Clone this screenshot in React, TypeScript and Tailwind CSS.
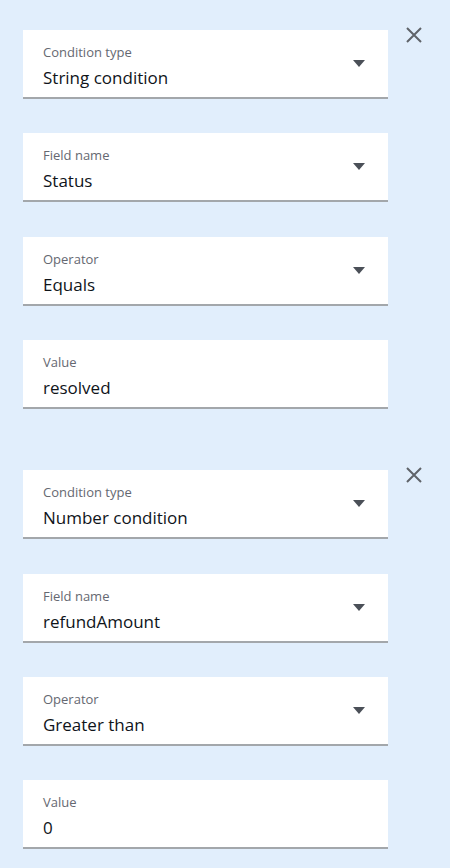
type Field = {
  label: string;
  value: string;
  select?: boolean;
};

const groups: Field[][] = [
  [
    { label: "Condition type", value: "String condition", select: true },
    { label: "Field name", value: "Status", select: true },
    { label: "Operator", value: "Equals", select: true },
    { label: "Value", value: "resolved" },
  ],
  [
    { label: "Condition type", value: "Number condition", select: true },
    { label: "Field name", value: "refundAmount", select: true },
    { label: "Operator", value: "Greater than", select: true },
    { label: "Value", value: "0" },
  ],
];

function FormField({ field }: { field: Field }) {
  return (
    <div className="relative flex h-[69px] w-[365px] flex-col border-b-2 border-[#a3a7ab] bg-white pt-[14px] pl-5">
      <span className="text-[13px] leading-4 text-[#656871]">{field.label}</span>
      <span className="mt-[6px] text-[17px] leading-6 text-[#0f141a]">{field.value}</span>
      {field.select && (
        <svg
          viewBox="0 0 12 7"
          className="absolute top-[30px] right-[23px] h-[7px] w-3"
        >
          <path d="M0 0h12L6 7z" fill="#4b5058" />
        </svg>
      )}
    </div>
  );
}

export default function App() {
  return (
    <div
      className="flex min-h-[868px] w-[450px] flex-col gap-[61px] bg-[#e1eefc] pt-[30px] pl-[23px]"
      style={{ fontFamily: "'Open Sans', Roboto, sans-serif" }}
    >
      {groups.map((fields, i) => (
        <div key={i} className="flex items-start gap-[18px]">
          <div className="flex flex-col gap-[34.4px]">
            {fields.map((f) => (
              <FormField key={f.label} field={f} />
            ))}
          </div>
          <button className="-mt-[3px] flex h-4 w-4 items-center justify-center">
            <svg viewBox="0 0 16 16" className="h-4 w-4">
              <path
                d="M1 1l14 14M15 1L1 15"
                stroke="#5f6369"
                strokeWidth="2"
                fill="none"
              />
            </svg>
          </button>
        </div>
      ))}
    </div>
  );
}
